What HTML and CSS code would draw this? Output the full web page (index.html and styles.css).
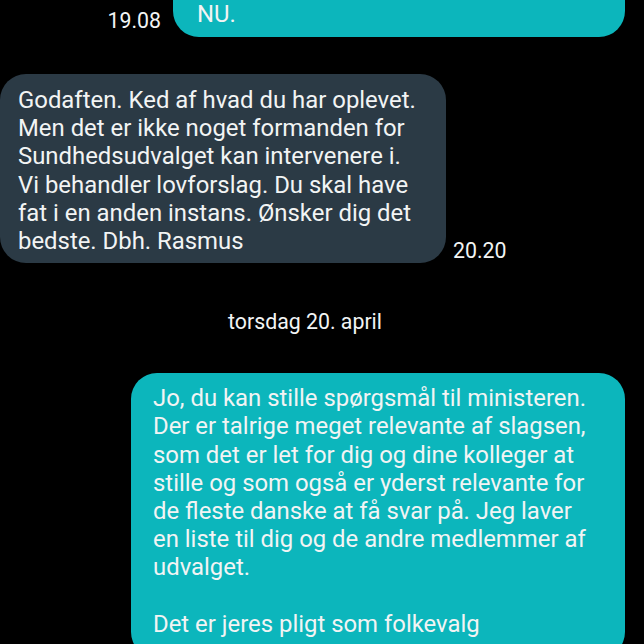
FILE: index.html
```html
<!DOCTYPE html>
<html lang="da">
<head>
<meta charset="utf-8">
<link rel="stylesheet" href="styles.css">
</head>
<body>
<div class="chat">
  <div class="row row-out row-top">
    <span class="time">19.08</span>
    <div class="bubble out top-bubble">NU.</div>
  </div>
  <div class="row row-in">
    <div class="bubble in">Godaften. Ked af hvad du har oplevet. Men det er ikke noget formanden for Sundhedsudvalget kan intervenere i. Vi behandler lovforslag. Du skal have fat i en anden instans. Ønsker dig det bedste. Dbh. Rasmus</div>
    <span class="time">20.20</span>
  </div>
  <div class="date">torsdag 20. april</div>
  <div class="row row-out">
    <div class="bubble out big">Jo, du kan stille spørgsmål til ministeren. Der er talrige meget relevante af slagsen, som det er let for dig og dine kolleger at stille og som også er yderst relevante for de fleste danske at få svar på. Jeg laver en liste til dig og de andre medlemmer af udvalget.<br><br>Det er jeres pligt som folkevalg</div>
  </div>
</div>
</body>
</html>
```

FILE: styles.css
```css
html, body {
  margin: 0;
  padding: 0;
  background: #000;
  width: 644px;
  height: 644px;
  overflow: hidden;
}
.chat {
  display: flex;
  flex-direction: column;
  font-family: Roboto, "Noto Sans", sans-serif;
  color: #f2f4f4;
}
.row {
  display: flex;
  align-items: flex-end;
}
.row-out {
  justify-content: flex-end;
  padding-right: 19px;
}
.row-top {
  margin-top: -40px;
}
.time {
  font-size: 21.3px;
  line-height: 24px;
}
.row-top .time {
  margin-right: 12px;
  margin-bottom: 4px;
}
.bubble {
  font-size: 23.9px;
  line-height: 28.2px;
  border-radius: 26px;
  box-sizing: border-box;
}
.out {
  background: #0cb6bc;
}
.top-bubble {
  width: 452px;
  height: 77px;
  padding: 40px 24px 9px;
}
.in {
  background: #2b3a45;
  width: 446px;
  padding: 12px 22px 8px 18px;
  margin-top: 37px;
}
.row-in .time {
  margin-left: 7px;
  margin-bottom: 0;
}
.date {
  margin-top: 47px;
  padding-right: 34px;
  text-align: center;
  font-size: 21.3px;
  line-height: 24px;
}
.big {
  width: 494px;
  margin-top: 39px;
  padding: 11px 24px 20px 22px;
}
```
